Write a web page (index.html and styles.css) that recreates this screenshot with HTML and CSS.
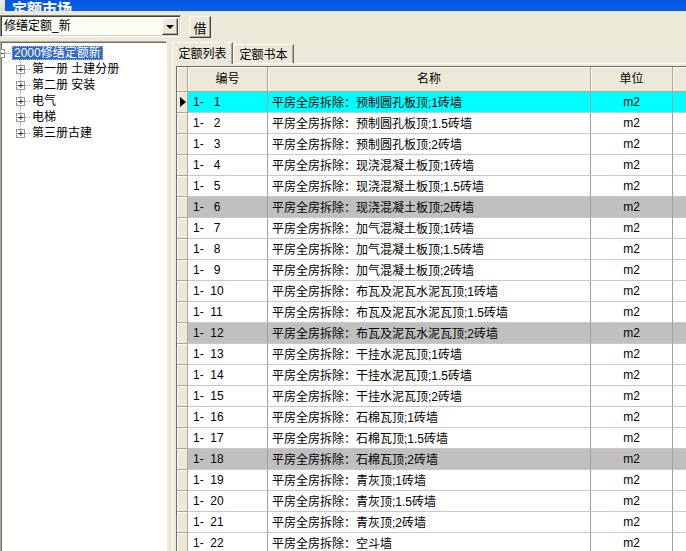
FILE: index.html
```html
<!DOCTYPE html>
<html lang="zh-CN">
<head>
<meta charset="utf-8">
<title>定额市场</title>
<link rel="stylesheet" href="styles.css">
</head>
<body>
<div class="window">
  <div class="titlebar">
    <span class="ticon"></span>
    <span class="ttext">定额市场</span>
  </div>
  <div class="toolbar">
    <div class="combo">
      <span class="combo-text">修缮定额_新</span>
      <span class="combo-btn"><span class="tri-down"></span></span>
    </div>
    <div class="btn">借</div>
  </div>
  <div class="main">
    <div class="tree">
      <div class="node root">
        <span class="box">−</span><span class="hline short"></span>
        <span class="label selected">2000修缮定额新</span>
      </div>
      <div class="children">
        <div class="node child"><span class="box">+</span><span class="hline"></span><span class="label">第一册 土建分册</span></div>
        <div class="node child"><span class="box">+</span><span class="hline"></span><span class="label">第二册 安装</span></div>
        <div class="node child"><span class="box">+</span><span class="hline"></span><span class="label">电气</span></div>
        <div class="node child"><span class="box">+</span><span class="hline"></span><span class="label">电梯</span></div>
        <div class="node child"><span class="box">+</span><span class="hline"></span><span class="label">第三册古建</span></div>
      </div>
    </div>
    <div class="right">
      <div class="tabs">
        <div class="tab active">定额列表</div>
        <div class="tab">定额书本</div>
      </div>
      <div class="page">
        <div class="grid">
          <div class="row head">
            <div class="c ind"></div>
            <div class="c center">编号</div>
            <div class="c center">名称</div>
            <div class="c center">单位</div>
            <div class="c"></div>
          </div>
          <div class="row cur"><div class="c ind"><span class="tri-right"></span></div><div class="c code">1-   1</div><div class="c">平房全房拆除<span class="colon">：</span>预制圆孔板顶;1砖墙</div><div class="c center">m2</div><div class="c"></div></div>
          <div class="row"><div class="c ind"></div><div class="c code">1-   2</div><div class="c">平房全房拆除<span class="colon">：</span>预制圆孔板顶;1.5砖墙</div><div class="c center">m2</div><div class="c"></div></div>
          <div class="row"><div class="c ind"></div><div class="c code">1-   3</div><div class="c">平房全房拆除<span class="colon">：</span>预制圆孔板顶;2砖墙</div><div class="c center">m2</div><div class="c"></div></div>
          <div class="row"><div class="c ind"></div><div class="c code">1-   4</div><div class="c">平房全房拆除<span class="colon">：</span>现浇混凝土板顶;1砖墙</div><div class="c center">m2</div><div class="c"></div></div>
          <div class="row"><div class="c ind"></div><div class="c code">1-   5</div><div class="c">平房全房拆除<span class="colon">：</span>现浇混凝土板顶;1.5砖墙</div><div class="c center">m2</div><div class="c"></div></div>
          <div class="row mark"><div class="c ind"></div><div class="c code">1-   6</div><div class="c">平房全房拆除<span class="colon">：</span>现浇混凝土板顶;2砖墙</div><div class="c center">m2</div><div class="c"></div></div>
          <div class="row"><div class="c ind"></div><div class="c code">1-   7</div><div class="c">平房全房拆除<span class="colon">：</span>加气混凝土板顶;1砖墙</div><div class="c center">m2</div><div class="c"></div></div>
          <div class="row"><div class="c ind"></div><div class="c code">1-   8</div><div class="c">平房全房拆除<span class="colon">：</span>加气混凝土板顶;1.5砖墙</div><div class="c center">m2</div><div class="c"></div></div>
          <div class="row"><div class="c ind"></div><div class="c code">1-   9</div><div class="c">平房全房拆除<span class="colon">：</span>加气混凝土板顶;2砖墙</div><div class="c center">m2</div><div class="c"></div></div>
          <div class="row"><div class="c ind"></div><div class="c code">1-  10</div><div class="c">平房全房拆除<span class="colon">：</span>布瓦及泥瓦水泥瓦顶;1砖墙</div><div class="c center">m2</div><div class="c"></div></div>
          <div class="row"><div class="c ind"></div><div class="c code">1-  11</div><div class="c">平房全房拆除<span class="colon">：</span>布瓦及泥瓦水泥瓦顶;1.5砖墙</div><div class="c center">m2</div><div class="c"></div></div>
          <div class="row mark"><div class="c ind"></div><div class="c code">1-  12</div><div class="c">平房全房拆除<span class="colon">：</span>布瓦及泥瓦水泥瓦顶;2砖墙</div><div class="c center">m2</div><div class="c"></div></div>
          <div class="row"><div class="c ind"></div><div class="c code">1-  13</div><div class="c">平房全房拆除<span class="colon">：</span>干挂水泥瓦顶;1砖墙</div><div class="c center">m2</div><div class="c"></div></div>
          <div class="row"><div class="c ind"></div><div class="c code">1-  14</div><div class="c">平房全房拆除<span class="colon">：</span>干挂水泥瓦顶;1.5砖墙</div><div class="c center">m2</div><div class="c"></div></div>
          <div class="row"><div class="c ind"></div><div class="c code">1-  15</div><div class="c">平房全房拆除<span class="colon">：</span>干挂水泥瓦顶;2砖墙</div><div class="c center">m2</div><div class="c"></div></div>
          <div class="row"><div class="c ind"></div><div class="c code">1-  16</div><div class="c">平房全房拆除<span class="colon">：</span>石棉瓦顶;1砖墙</div><div class="c center">m2</div><div class="c"></div></div>
          <div class="row"><div class="c ind"></div><div class="c code">1-  17</div><div class="c">平房全房拆除<span class="colon">：</span>石棉瓦顶;1.5砖墙</div><div class="c center">m2</div><div class="c"></div></div>
          <div class="row mark"><div class="c ind"></div><div class="c code">1-  18</div><div class="c">平房全房拆除<span class="colon">：</span>石棉瓦顶;2砖墙</div><div class="c center">m2</div><div class="c"></div></div>
          <div class="row"><div class="c ind"></div><div class="c code">1-  19</div><div class="c">平房全房拆除<span class="colon">：</span>青灰顶;1砖墙</div><div class="c center">m2</div><div class="c"></div></div>
          <div class="row"><div class="c ind"></div><div class="c code">1-  20</div><div class="c">平房全房拆除<span class="colon">：</span>青灰顶;1.5砖墙</div><div class="c center">m2</div><div class="c"></div></div>
          <div class="row"><div class="c ind"></div><div class="c code">1-  21</div><div class="c">平房全房拆除<span class="colon">：</span>青灰顶;2砖墙</div><div class="c center">m2</div><div class="c"></div></div>
          <div class="row"><div class="c ind"></div><div class="c code">1-  22</div><div class="c">平房全房拆除<span class="colon">：</span>空斗墙</div><div class="c center">m2</div><div class="c"></div></div>
        </div>
      </div>
    </div>
  </div>
</div>
</body>
</html>
```

FILE: styles.css
```css
html, body {
  margin: 0;
  padding: 0;
}
body {
  width: 686px;
  height: 551px;
  overflow: hidden;
  background: #ECE9D8;
  font-family: "Liberation Sans", "Noto Sans CJK SC", sans-serif;
  font-size: 12px;
  color: #000;
}
.window {
  width: 686px;
  height: 551px;
  overflow: hidden;
  display: flex;
  flex-direction: column;
}

/* title bar */
.titlebar {
  height: 11px;
  flex: none;
  overflow: hidden;
  display: flex;
  align-items: flex-end;
  background: linear-gradient(to bottom, #0453DE 0%, #0A5DEB 60%, #0B5BE6 100%);
}
.ticon {
  width: 5px;
  height: 20px;
  margin-bottom: -8px;
  background: linear-gradient(#f0f0f0, #c8c8c8);
  flex: none;
}
.ttext {
  color: #fff;
  font-weight: bold;
  font-size: 15px;
  line-height: 20px;
  margin-bottom: -7px;
  margin-left: 7px;
  flex: none;
  font-family: "Noto Sans CJK SC", sans-serif;
}

/* toolbar */
.toolbar {
  height: 29px;
  flex: none;
  display: flex;
  align-items: flex-start;
  padding-top: 4px;
  box-sizing: border-box;
}
.combo {
  width: 181px;
  height: 22px;
  box-sizing: border-box;
  border-top: 1px solid #808080;
  border-left: 1px solid #808080;
  border-right: 1px solid #fff;
  border-bottom: 1px solid #fff;
  box-shadow: inset 1px 1px 0 #404040, inset -1px -1px 0 #D4D0C8;
  background: #FCFCF4;
  display: flex;
  align-items: center;
  padding: 2px 2px 2px 3px;
}
.combo-text {
  flex: 1;
  line-height: 18px;
  font-size: 12px;
}
.combo-btn {
  width: 16px;
  height: 17px;
  box-sizing: border-box;
  background: #ECE9D8;
  border-top: 1px solid #fff;
  border-left: 1px solid #fff;
  border-right: 1px solid #404040;
  border-bottom: 1px solid #404040;
  box-shadow: inset -1px -1px 0 #ACA899;
  display: flex;
  align-items: center;
  justify-content: center;
}
.tri-down {
  width: 0;
  height: 0;
  border-left: 4px solid transparent;
  border-right: 4px solid transparent;
  border-top: 4px solid #000;
  margin-top: 1px;
}
.btn {
  width: 22px;
  height: 22px;
  margin-left: 8px;
  margin-top: 1px;
  box-sizing: border-box;
  background: #ECE9D8;
  border-top: 1px solid #fff;
  border-left: 1px solid #fff;
  border-right: 1px solid #404040;
  border-bottom: 1px solid #404040;
  box-shadow: inset -1px -1px 0 #ACA899;
  display: flex;
  align-items: center;
  justify-content: center;
  font-family: "Noto Sans CJK SC", sans-serif;
  font-size: 13px;
}

/* main */
.main {
  flex: 1;
  display: flex;
  min-height: 0;
}
.tree {
  width: 167px;
  flex: none;
  margin-top: 1px;
  box-sizing: border-box;
  background: #fff;
  border-top: 1px solid #ACA899;
  border-left: 1px solid #ACA899;
  border-right: 1px solid #fff;
  box-shadow: inset 1px 1px 0 #716F64;
  padding-top: 3px;
  overflow: hidden;
}
.node {
  height: 16px;
  display: flex;
  align-items: center;
  white-space: nowrap;
}
.box {
  width: 9px;
  height: 9px;
  box-sizing: border-box;
  border: 1px solid #919B9C;
  background: #fff;
  font-size: 9px;
  line-height: 7px;
  text-align: center;
  font-family: "DejaVu Sans", sans-serif;
  color: #000;
  flex: none;
  position: relative;
  z-index: 1;
}
.root .box {
  margin-left: -5px;
}
.hline {
  width: 5px;
  flex: none;
  border-top: 1px dotted #A0A0A0;
}
.hline.short {
  width: 6px;
}
.label {
  padding: 0 2px;
  line-height: 14px;
  font-size: 12px;
}
.root .label {
  margin-left: 1px;
}
.label.selected {
  background: #316AC5;
  color: #fff;
  outline: 1px dotted #9BB4E0;
  outline-offset: -1px;
}
.children {
  position: relative;
}
.children::before {
  content: "";
  position: absolute;
  left: 19px;
  top: -2px;
  bottom: 8px;
  border-left: 1px dotted #A0A0A0;
}
.child .box {
  margin-left: 15px;
}

/* right side */
.right {
  flex: 1;
  margin-left: 5px;
  display: flex;
  flex-direction: column;
  min-width: 0;
}
.tabs {
  height: 23px;
  flex: none;
  display: flex;
  align-items: flex-end;
  position: relative;
  z-index: 1;
}
.tab {
  width: 61px;
  box-sizing: border-box;
  height: 19px;
  text-align: center;
  line-height: 18px;
  font-size: 12px;
  font-family: "Noto Sans CJK SC", sans-serif;
  border-top: 1px solid #fff;
  border-left: 1px solid #fff;
  border-right: 1px solid #716F64;
  box-shadow: inset -1px 0 0 #ACA899;
  background: #ECE9D8;
}
.tab.active {
  height: 22px;
  margin-bottom: -1px;
  line-height: 20px;
}
.page {
  flex: 1;
  border-top: 1px solid #fff;
  border-left: 1px solid #fff;
  padding: 2px 0 0 3px;
  min-height: 0;
  overflow: hidden;
}
.grid {
  border-top: 1px solid #716F64;
  border-left: 1px solid #716F64;
  background: #fff;
  width: 600px;
}
.row {
  display: grid;
  grid-template-columns: 11px 80px 323px 82px 104px;
  height: 21px;
}
.row.head {
  height: 25px;
}
.c {
  box-sizing: border-box;
  border-right: 1px solid #A0A0A0;
  border-bottom: 1px solid #C8C8C8;
  padding: 0 0 0 4px;
  line-height: 20px;
  white-space: pre;
  overflow: hidden;
}
.c.center {
  text-align: center;
  padding: 0;
}
.head .c {
  background: #ECE9D8;
  border-right: 1px solid #ACA899;
  border-bottom: 1px solid #ACA899;
  box-shadow: inset 1px 1px 0 #fff;
  line-height: 24px;
}
.c.ind {
  background: #ECE9D8;
  border-right: 1px solid #ACA899;
  border-bottom: 1px solid #ACA899;
  box-shadow: inset 1px 1px 0 #fff;
  padding: 0;
  display: flex;
  align-items: center;
  justify-content: center;
}
.c.code {
  padding-left: 5px;
}
.colon {
  font-family: "Noto Sans CJK TC", sans-serif;
}
.tri-right {
  width: 0;
  height: 0;
  border-top: 5px solid transparent;
  border-bottom: 5px solid transparent;
  border-left: 6px solid #000;
  margin-left: 1px;
}
.row.cur .c:not(.ind) {
  background: #00FFFF;
}
.row.mark .c:not(.ind) {
  background: #C0C0C0;
}
```
